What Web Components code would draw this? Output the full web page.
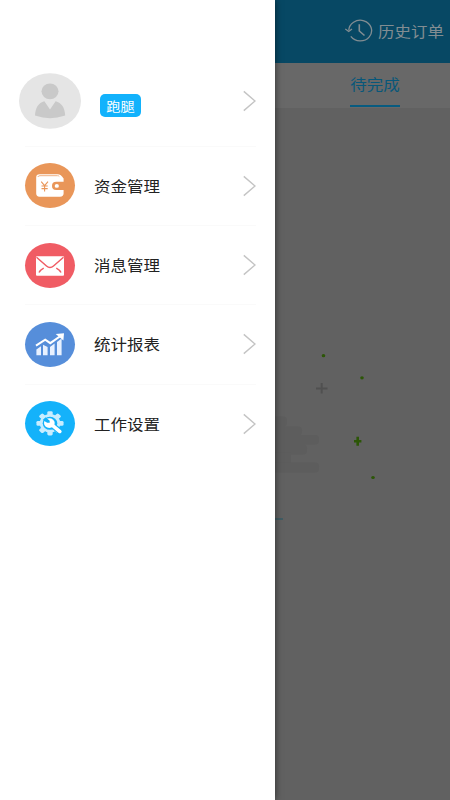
<!DOCTYPE html>
<html lang="zh-CN">
<head>
<meta charset="utf-8">
<title>订单</title>
<style>
html,body{margin:0;height:100%;overflow:hidden}
body{font-family:"Noto Sans CJK SC",sans-serif;background:#616161}
</style>
</head>
<body>
<rider-app></rider-app>
<script>
function define(name, html) {
  customElements.define(name, class extends HTMLElement {
    constructor() {
      super();
      const t = document.createElement('template');
      t.innerHTML = html;
      this.attachShadow({mode: 'open'}).append(t.content.cloneNode(true));
    }
  });
}

define('chevron-icon', `
<style>:host{display:block;width:14px;height:22px;flex:none}svg{display:block}</style>
<svg width="14" height="22" viewBox="0 0 14 22" fill="none" stroke="#c4c4c4" stroke-width="1.4"><path d="M1.8 1.4 13 11 1.8 20.6"/></svg>`);

define('role-badge', `
<style>:host{display:flex;align-items:center;justify-content:center;width:41px;height:23px;border-radius:5px;background:#12b2fc;color:#fff;font-size:14.2px;line-height:20px;white-space:nowrap}
span{transform:translateY(-.5px) scaleY(.9)}</style><span><slot></slot></span>`);

define('profile-row', `
<style>:host{display:flex;box-sizing:border-box;height:90.2px;margin-left:19px;width:237px;align-items:center}
svg{display:block;flex:none}.tag{margin-left:19px;padding-top:10px;flex:1}</style>
<svg width="62" height="56" viewBox="0 0 62 56"><ellipse cx="31" cy="28" rx="31" ry="27.8" fill="#e5e5e5"/><ellipse cx="31" cy="18.3" rx="8.5" ry="7.9" fill="#c9c9c9"/><path d="M25.4 28.2 31 36.5 36.6 28.2C42.5 29.6 46 35 46.2 42.6Q38 45.2 31 45.2T16 42.6C16.3 35 19.5 29.6 25.4 28.2Z" fill="#c9c9c9"/></svg>
<div class="tag"><role-badge><slot></slot></role-badge></div>
<chevron-icon></chevron-icon>`);

define('menu-row', `
<style>:host{display:flex;box-sizing:border-box;height:79.3px;width:231px;margin-left:25px;border-top:1px solid #fafafa;align-items:center;color:#222}
.icon{width:50px;height:45px;flex:none;border-radius:50%;background:var(--tone);overflow:hidden}
.label{flex:1;margin-left:19px;font-size:16.5px;line-height:24px;white-space:nowrap;transform:translateY(-.4px) scaleY(.92)}</style>
<div class="icon"><slot name="icon"></slot></div><span class="label"><slot></slot></span><chevron-icon></chevron-icon>`);

define('side-drawer', `
<style>:host{display:block;position:absolute;inset:0 auto 0 0;width:275px;padding-top:55.5px;box-sizing:border-box;background:#fff;box-shadow:0 0 7px rgba(0,0,0,.55)}
svg{display:block}</style>
<profile-row>跑腿</profile-row>
<menu-row style="--tone:#e99659">
<svg slot="icon" width="50" height="45" viewBox="0 0 50 45"><path d="M14.5 11.2H32.5Q36 11.2 38.6 15.5V18.8H31.2Q27 18.8 27 22.9T31.2 27H38.6V30.6Q38.6 33.7 35 33.7H14.5Q11.2 33.7 11.2 30.6V14.4Q11.2 11.2 14.5 11.2Z" fill="#fff"/><path d="M12.8 14Q13.3 12.7 15 12.7H32.5Q33.8 12.7 34.3 13.5" fill="none" stroke="#efb083" stroke-width="1"/><ellipse cx="31.8" cy="22.9" rx="2.1" ry="1.9" fill="#fff"/><path d="m16.2 18.6 3.4 4.1 3.4-4.1M19.6 22.7V28.6M16.5 23H22.7M16.5 25.6H22.7" stroke="#e99659" stroke-width="1.1" fill="none"/></svg>资金管理</menu-row>
<menu-row style="--tone:#f05c64">
<svg slot="icon" width="50" height="45" viewBox="0 0 50 45"><rect x="11" y="13.2" width="28" height="19.5" rx="1" fill="#fff"/><path d="M11.5 14.3 21.5 23Q25 26 28.5 23L38.5 14.3M14 29.5Q15.5 26.8 18.7 25.1M36 29.5Q34.5 26.8 31.3 25.1" fill="none" stroke="#f05c64" stroke-width="1.5"/></svg>消息管理</menu-row>
<menu-row style="--tone:#568eda">
<svg slot="icon" width="50" height="45" viewBox="0 0 50 45"><path d="M11.4 27.5 16 24.2V33.2H11.4ZM18 22.8 22.6 25V33.2H18ZM25 25 29.6 21.5V33.2H25ZM32 20 36.6 16.5V33.2H32Z" fill="#e8f1ff"/><path d="M11 23.7 20.2 17.7 25.3 21.2 34.8 14.5" fill="none" stroke="#fff" stroke-width="2.1"/><path d="M30.7 12 39 11.2 38.4 18.5Z" fill="#fff"/></svg>统计报表</menu-row>
<menu-row style="--tone:#14b2fa">
<svg slot="icon" width="50" height="45" viewBox="0 0 50 45"><g transform="translate(25 22.3) scale(1.12 1)"><g fill="#c8edff"><circle r="9.2"/><rect x="-2.4" y="-12.1" width="4.8" height="24.2" rx="1.3"/><rect x="-12.1" y="-2.4" width="24.2" height="4.8" rx="1.3"/><g transform="rotate(45)"><rect x="-2.4" y="-12.1" width="4.8" height="24.2" rx="1.3"/><rect x="-12.1" y="-2.4" width="24.2" height="4.8" rx="1.3"/></g></g><circle r="6.5" fill="#14b2fa"/><path d="M1 1 9.3 8.6" stroke="#14b2fa" stroke-width="5.6" stroke-linecap="round"/><path d="M0 0 8.7 8.2" stroke="#fff" stroke-width="3.4" stroke-linecap="round"/><circle cx="-.6" cy="-.2" r="4.8" fill="#fff"/><path d="M-6.5-3.2-3.9-6-.3-2.6-.3-.6-2.5-.6Z" fill="#14b2fa"/></g></svg>工作设置</menu-row>`);

define('order-header', `
<style>:host{display:flex;height:62.5px;box-sizing:border-box;background:#074864;color:#828d92;justify-content:flex-end;align-items:center;padding-right:6px}
svg{display:block;margin-right:5px}span{font-size:16.5px;line-height:24px;transform:scaleY(.92);white-space:nowrap}</style>
<svg width="28" height="24" viewBox="0 0 28 24" fill="none" stroke="#828d92" stroke-width="1.3"><path d="M3.8 11.5A11.4 10.3 0 1 1 5.8 17.4"/><path d="M.3 9.9 3.7 12.5 7 9.9"/><path d="M14.3 5.2V12L19.5 16.5" stroke-width="1.6"/></svg><span><slot></slot></span>`);

define('order-tabs', `
<style>:host{display:flex;height:45px;background:#686868;color:#07577a;justify-content:flex-end;padding-right:50px;box-sizing:border-box}
.tab{width:50px;box-sizing:border-box;border-bottom:2px solid #075b80;display:flex;align-items:center;justify-content:center;height:44.5px}
span{font-size:16.5px;line-height:24px;transform:scaleY(.92);white-space:nowrap}</style>
<div class="tab"><span><slot></slot></span></div>`);

define('empty-state', `
<style>:host{display:block;flex:1;background:#616161;overflow:hidden}svg{display:block}</style>
<svg width="450" height="693" viewBox="0 107.5 450 693">
<g fill="#5d5d5d"><rect x="260" y="416" width="27" height="10" rx="4"/><rect x="260" y="426" width="42" height="9" rx="4"/><rect x="260" y="434.5" width="59" height="9.5" rx="4"/><rect x="260" y="444" width="47" height="10" rx="4"/><rect x="260" y="452" width="31" height="12"/><rect x="260" y="462" width="59" height="10" rx="4"/></g>
<path d="M316 388H327.5M321.7 382.5V393" stroke="#505050" stroke-width="2"/>
<path d="M354 440.8H361.4M357.7 436.3V445.3" stroke="#2c5607" stroke-width="2.6"/>
<g fill="#2c5607"><ellipse cx="323.5" cy="355.2" rx="1.8" ry="1.6"/><ellipse cx="362" cy="377.3" rx="1.8" ry="1.6"/><ellipse cx="373" cy="477" rx="1.8" ry="1.6"/></g>
<path d="M260 518.5H283" stroke="#2d5965" stroke-width="1.2"/></svg>`);

define('rider-app', `
<style>:host{display:flex;flex-direction:column;position:relative;width:450px;height:800px;overflow:hidden}</style>
<order-header>历史订单</order-header>
<order-tabs>待完成</order-tabs>
<empty-state></empty-state>
<side-drawer></side-drawer>`);
</script>
</body>
</html>
